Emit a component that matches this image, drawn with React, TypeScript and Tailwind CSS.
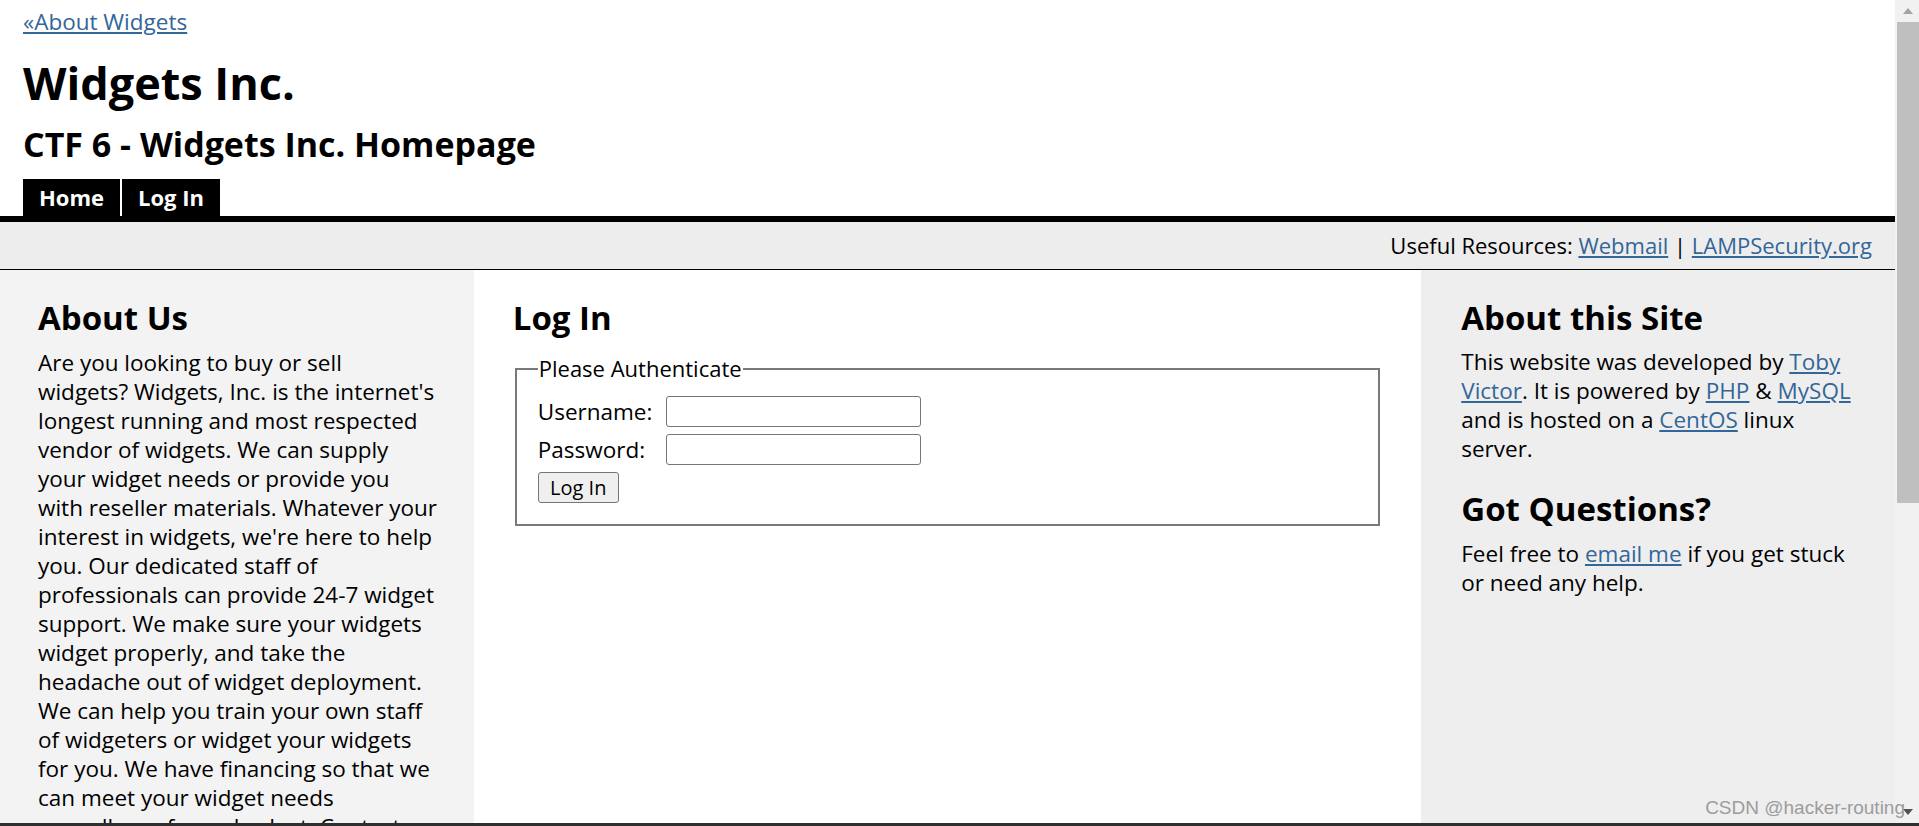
const link = "text-[#336699] underline";

function Scrollbar() {
  return (
    <div className="flex w-[24px] shrink-0 flex-col bg-[#f1f1f1] pl-[2px]">
      <div className="flex h-[22px] items-center justify-center">
        <svg width="10" height="6" viewBox="0 0 10 6">
          <path d="M5 0 L10 6 L0 6 Z" fill="#a3a3a3" />
        </svg>
      </div>
      <div className="h-[481px] bg-[#bfbfbf]" />
      <div className="flex-1" />
      <div className="flex h-[22px] items-center justify-center">
        <svg width="10" height="6" viewBox="0 0 10 6">
          <path d="M0 0 L10 0 L5 6 Z" fill="#505050" />
        </svg>
      </div>
    </div>
  );
}

function Header() {
  return (
    <div>
      <div className="px-[23px] pt-[7px]">
        <a href="#" className={`${link} block w-fit`}>
          «About Widgets
        </a>
        <h1 className="mt-[20px] text-[45px] font-bold leading-[54px]">Widgets Inc.</h1>
        <h3 className="mt-[14px] text-[34px] font-bold leading-[40px]">CTF 6 - Widgets Inc. Homepage</h3>
        <nav className="mt-[15px] flex text-[22px]">
          <a href="#" className="flex h-[37px] items-center border-r-2 border-white bg-black px-[16px] font-bold text-white">
            Home
          </a>
          <a href="#" className="flex h-[37px] items-center bg-black px-[16px] font-bold text-white">
            Log In
          </a>
        </nav>
      </div>
      <div className="h-[6px] bg-black" />
      <div className="flex h-[48px] items-center justify-end border-b border-black bg-[#ededed] pr-[23px] text-[22px]">
        <span>
          Useful Resources:{" "}
          <a href="#" className={link}>
            Webmail
          </a>{" "}
          |{" "}
          <a href="#" className={link}>
            LAMPSecurity.org
          </a>
        </span>
      </div>
    </div>
  );
}

function LoginForm() {
  return (
    <fieldset className="mx-[2px] mt-[16px] border-2 border-[#7a7a7a] px-[21px] pb-[21px]">
      <legend className="px-[1px] text-[22px]">Please Authenticate</legend>
      <div className="mt-[13px] grid w-fit grid-cols-[123px_auto] items-center gap-x-[5px] gap-y-[7px]">
        <label>Username:</label>
        <input type="text" className="h-[31px] w-[255px] rounded-[3px] border border-[#767676] bg-white px-1" />
        <label>Password:</label>
        <input type="password" className="h-[31px] w-[255px] rounded-[3px] border border-[#767676] bg-white px-1" />
        <button className="h-[31px] w-[81px] rounded-[3px] border border-[#767676] bg-[#efefef] text-[20px]">
          Log In
        </button>
      </div>
    </fieldset>
  );
}

export default function App() {
  return (
    <div className="relative h-[826px] w-full overflow-hidden bg-white font-['Open_Sans',sans-serif] text-[22.5px] leading-[29px] text-black">
      <div className="flex h-[823px]">
        <div className="min-w-0 flex-1 overflow-hidden">
          <Header />
          <div className="grid h-full grid-cols-[1fr_2fr_1fr]">
            {/* About Us */}
            <div className="bg-[#f3f3f3] pl-[38px] pr-[36px] pt-[28px]">
              <h2 className="text-[33px] font-bold leading-[40px]">About Us</h2>
              <p className="mt-[10px]">
                Are you looking to buy or sell widgets? Widgets, Inc. is the internet's longest running and most
                respected vendor of widgets. We can supply your widget needs or provide you with reseller materials.
                Whatever your interest in widgets, we're here to help you. Our dedicated staff of professionals can
                provide 24-7 widget support. We make sure your widgets widget properly, and take the headache out of
                widget deployment. We can help you train your own staff of widgeters or widget your widgets for you.
                We have financing so that we can meet your widget needs regardless of your budget. Contact a sales
                representative today to find out more.
              </p>
            </div>

            {/* Log In */}
            <div className="bg-white pl-[39px] pr-[39px] pt-[28px]">
              <h2 className="text-[33px] font-bold leading-[40px]">Log In</h2>
              <LoginForm />
            </div>

            {/* About this Site */}
            <div className="bg-[#eeeeee] px-[40px] pt-[28px]">
              <h2 className="text-[33px] font-bold leading-[40px]">About this Site</h2>
              <p className="mt-[9px]">
                This website was developed by{" "}
                <a href="#" className={link}>
                  Toby Victor
                </a>
                . It is powered by{" "}
                <a href="#" className={link}>
                  PHP
                </a>{" "}
                &amp;{" "}
                <a href="#" className={link}>
                  MySQL
                </a>{" "}
                and is hosted on a{" "}
                <a href="#" className={link}>
                  CentOS
                </a>{" "}
                linux server.
              </p>
              <h2 className="mt-[26px] text-[33px] font-bold leading-[40px]">Got Questions?</h2>
              <p className="mt-[10px]">
                Feel free to{" "}
                <a href="#" className={link}>
                  email me
                </a>{" "}
                if you get stuck or need any help.
              </p>
            </div>
          </div>
        </div>
        <Scrollbar />
      </div>
      <div className="h-[3px] bg-[#2f2f2f]" />
      <div className="absolute bottom-[7px] right-[14px] font-['Liberation_Sans',sans-serif] text-[19px] leading-[22px] text-[#9c9c9c]">
        CSDN @hacker-routing
      </div>
    </div>
  );
}
